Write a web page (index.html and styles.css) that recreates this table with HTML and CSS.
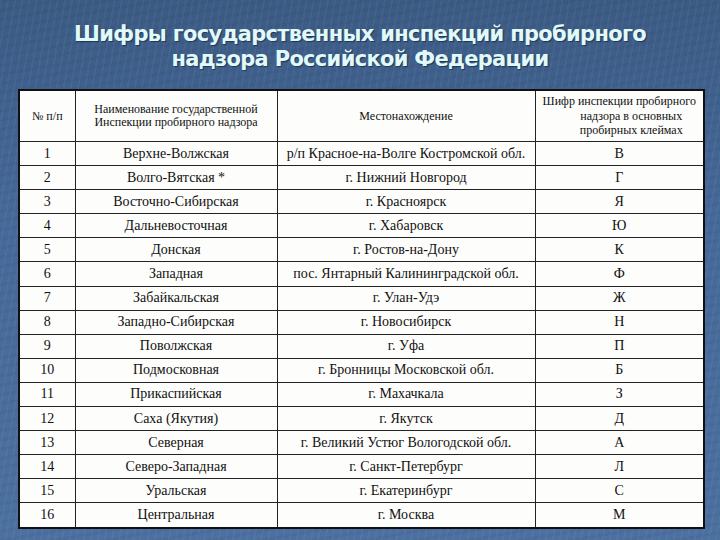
FILE: index.html
```html
<!DOCTYPE html>
<html lang="ru">
<head>
<meta charset="utf-8">
<title>Шифры государственных инспекций</title>
<link rel="stylesheet" href="styles.css">
</head>
<body>
<div class="slide">
  <h1 class="title">Шифры государственных инспекций пробирного<br>надзора Российской Федерации</h1>
  <table class="grid">
    <colgroup>
      <col class="c1"><col class="c2"><col class="c3"><col class="c4">
    </colgroup>
    <thead>
      <tr>
        <th>№ п/п</th>
        <th>Наименование государственной<br>Инспекции пробирного надзора</th>
        <th class="loc">Местонахождение</th>
        <th class="cipher">Шифр инспекции пробирного<br><span class="ind">надзора в основных</span><br><span class="ind">пробирных клеймах</span></th>
      </tr>
    </thead>
    <tbody>
      <tr><td>1</td><td>Верхне-Волжская</td><td>р/п Красное-на-Волге Костромской обл.</td><td>В</td></tr>
      <tr><td>2</td><td>Волго-Вятская *</td><td>г. Нижний Новгород</td><td>Г</td></tr>
      <tr><td>3</td><td>Восточно-Сибирская</td><td>г. Красноярск</td><td>Я</td></tr>
      <tr><td>4</td><td>Дальневосточная</td><td>г. Хабаровск</td><td>Ю</td></tr>
      <tr><td>5</td><td>Донская</td><td>г. Ростов-на-Дону</td><td>К</td></tr>
      <tr><td>6</td><td>Западная</td><td>пос. Янтарный Калининградской обл.</td><td>Ф</td></tr>
      <tr><td>7</td><td>Забайкальская</td><td>г. Улан-Удэ</td><td>Ж</td></tr>
      <tr><td>8</td><td>Западно-Сибирская</td><td>г. Новосибирск</td><td>Н</td></tr>
      <tr><td>9</td><td>Поволжская</td><td>г. Уфа</td><td>П</td></tr>
      <tr><td>10</td><td>Подмосковная</td><td>г. Бронницы Московской обл.</td><td>Б</td></tr>
      <tr><td>11</td><td>Прикаспийская</td><td>г. Махачкала</td><td>З</td></tr>
      <tr><td>12</td><td>Саха (Якутия)</td><td>г. Якутск</td><td>Д</td></tr>
      <tr><td>13</td><td>Северная</td><td>г. Великий Устюг Вологодской обл.</td><td>А</td></tr>
      <tr><td>14</td><td>Северо-Западная</td><td>г. Санкт-Петербург</td><td>Л</td></tr>
      <tr><td>15</td><td>Уральская</td><td>г. Екатеринбург</td><td>С</td></tr>
      <tr><td>16</td><td>Центральная</td><td>г. Москва</td><td>М</td></tr>
    </tbody>
  </table>
</div>
</body>
</html>
```
FILE: styles.css
```css
html, body {
  margin: 0;
  padding: 0;
}
body {
  width: 720px;
  height: 540px;
  overflow: hidden;
  background:
    repeating-linear-gradient(100deg, rgba(255,255,255,0.035) 0 2px, rgba(0,0,0,0) 2px 7px),
    repeating-linear-gradient(170deg, rgba(0,0,0,0.04) 0 3px, rgba(0,0,0,0) 3px 9px),
    linear-gradient(180deg, #3b5b84 0%, #46699a 40%, #4c70a0 100%);
}
.slide {
  display: flex;
  flex-direction: column;
  align-items: center;
  padding-top: 22px;
}
.title {
  margin: 0;
  font-family: "DejaVu Sans", "Liberation Sans", sans-serif;
  font-weight: bold;
  font-size: 21px;
  line-height: 25px;
  color: #e0f9fa;
  text-align: center;
  letter-spacing: -0.7px;
  text-shadow: 1px 1px 1px rgba(10, 25, 50, 0.6);
}
.grid {
  margin-top: 17px;
  margin-left: 18px;
  align-self: flex-start;
  width: 685px;
  table-layout: fixed;
  border-collapse: collapse;
  background: #fdfdfb;
  border: 2px solid #111;
  color: #111;
}
.c1 { width: 56px; }
.c2 { width: 202px; }
.c3 { width: 258px; }
.c4 { width: 169px; }
.grid th, .grid td {
  border: 1px solid #222;
  padding: 0;
  text-align: center;
  vertical-align: middle;
  font-family: "Liberation Serif", "Tinos", "Times New Roman", "DejaVu Serif", serif;
}
.grid th {
  height: 50px;
  font-weight: normal;
  font-size: 12px;
  line-height: 13px;
}
.grid th.cipher {
  line-height: 14.5px;
}
.grid .ind {
  padding-left: 24px;
}
.grid td {
  height: 23.1px;
  font-size: 14px;
  line-height: 16px;
}
```
